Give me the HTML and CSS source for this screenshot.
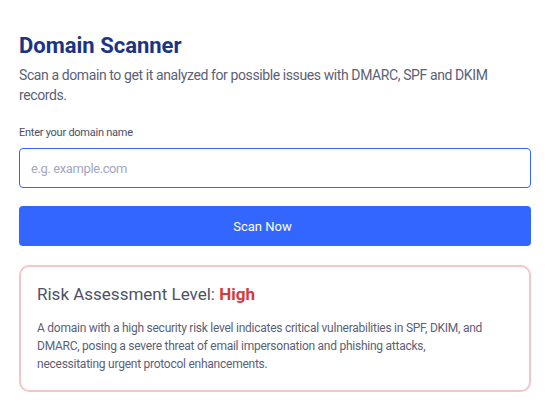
FILE: index.html
```html
<!DOCTYPE html>
<html>
<head>
<meta charset="utf-8">
<link rel="stylesheet" href="styles.css">
</head>
<body>
<main class="scanner">
  <h1 class="title">Domain Scanner</h1>
  <p class="subtitle">Scan a domain to get it analyzed for possible issues with DMARC, SPF and DKIM records.</p>
  <label class="label" for="domain">Enter your domain name</label>
  <input class="input" id="domain" type="text" placeholder="e.g. example.com">
  <button class="button">Scan Now</button>
  <section class="card">
    <h2 class="card-title">Risk Assessment Level: <span class="level">High</span></h2>
    <p class="card-text">A domain with a high security risk level indicates critical vulnerabilities in SPF, DKIM, and DMARC, posing a severe threat of email impersonation and phishing attacks, necessitating urgent protocol enhancements.</p>
  </section>
</main>
</body>
</html>
```
FILE: styles.css
```css
html, body {
  margin: 0;
  padding: 0;
  background: #ffffff;
}
body {
  font-family: Roboto, "Liberation Sans", sans-serif;
}
.scanner {
  display: flex;
  flex-direction: column;
  padding: 32px 17px 0 19px;
}
.title {
  margin: 0;
  font-size: 22px;
  line-height: 28px;
  font-weight: 700;
  color: #1a3486;
}
.subtitle {
  margin: 5px 0 0;
  max-width: 505px;
  font-size: 14px;
  line-height: 20px;
  letter-spacing: -0.4px;
  color: #5b5f77;
}
.label {
  margin-top: 20px;
  font-size: 11px;
  line-height: 16px;
  letter-spacing: -0.25px;
  color: #4a4e63;
}
.input {
  margin-top: 7px;
  height: 40px;
  box-sizing: border-box;
  border: 1px solid #3366ff;
  border-radius: 4px;
  padding: 0 11px;
  font-family: inherit;
  font-size: 13px;
  letter-spacing: -0.4px;
  color: #333;
  outline: none;
}
.input::placeholder {
  color: #a3a8c3;
}
.button {
  margin-top: 18px;
  height: 40px;
  border: none;
  border-radius: 4px;
  padding: 0 25px 0 0;
  background: #3366ff;
  color: #ffffff;
  font-family: inherit;
  font-size: 13px;
}
.card {
  margin-top: 19px;
  border: 2px solid #f4c7c7;
  border-radius: 10px;
  padding: 16px 16px 17px;
}
.card-title {
  margin: 0;
  font-size: 17px;
  line-height: 22px;
  font-weight: 400;
  color: #4e5268;
}
.level {
  font-weight: 700;
  color: #d63a3a;
}
.card-text {
  margin: 14px 0 0;
  max-width: 453px;
  font-size: 12px;
  line-height: 18px;
  letter-spacing: -0.25px;
  color: #5b5f77;
}
```
